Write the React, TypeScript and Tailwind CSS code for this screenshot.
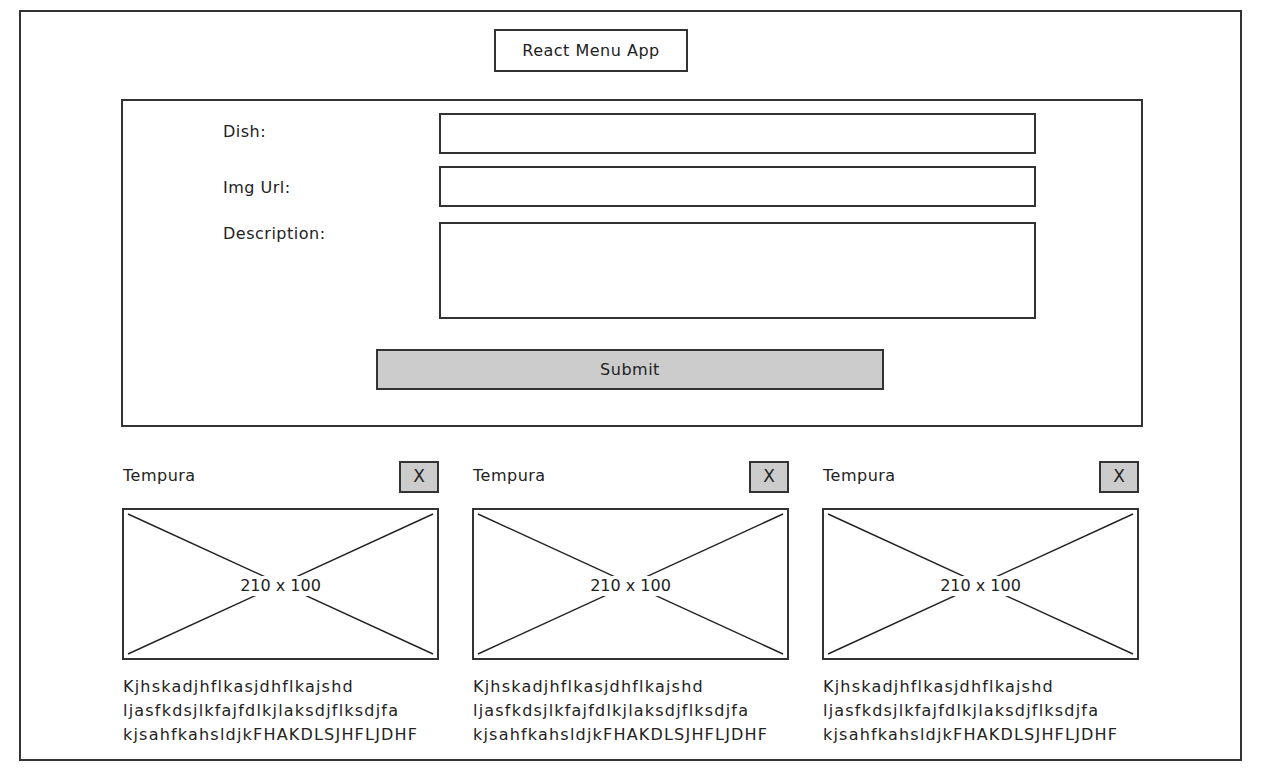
import React from 'react';

const font = { fontFamily: '"DejaVu Sans", "Liberation Sans", sans-serif' };

const dishes = [0, 1, 2].map((i) => ({
  id: i,
  name: 'Tempura',
  lines: [
    'Kjhskadjhflkasjdhflkajshd',
    'ljasfkdsjlkfajfdlkjlaksdjflksdjfa',
    'kjsahfkahsldjkFHAKDLSJHFLJDHF',
  ],
}));

// wireframe image placeholder with the cross
const Placeholder: React.FC = () => (
  <div className="relative h-[152px] w-full border-2 border-[#333] bg-white">
    <svg className="absolute inset-0 h-full w-full" preserveAspectRatio="none" viewBox="0 0 313 148">
      <line x1="4" y1="4" x2="309" y2="144" stroke="#222" strokeWidth="1.4" />
      <line x1="309" y1="4" x2="4" y2="144" stroke="#222" strokeWidth="1.4" />
    </svg>
    <div className="absolute inset-0 flex items-center justify-center pt-[3px]">
      <span className="bg-white px-[2px] text-[16px] leading-[20px] text-[#222]">210 x 100</span>
    </div>
  </div>
);

const Card: React.FC<{ name: string; lines: string[] }> = ({ name, lines }) => (
  <div className="flex w-[317px] flex-col">
    <div className="flex h-[32px] items-start justify-between">
      <span className="pl-[1px] pt-[5px] text-[16px] leading-[20px] tracking-[0.5px] text-[#222]">{name}</span>
      <button className="flex h-[32px] w-[40px] items-center justify-center border-2 border-[#333] bg-[#cccccc] text-[17px] text-[#222]">
        X
      </button>
    </div>
    <div className="mt-[15px]">
      <Placeholder />
    </div>
    <div className="mt-[15px] pl-[1px] text-[16px] leading-[24px] tracking-[1.2px] text-[#222]">
      {lines.map((l, i) => (
        <div key={i}>{l}</div>
      ))}
    </div>
  </div>
);

const App: React.FC = () => {
  return (
    <div className="h-[777px] w-[1274px] overflow-hidden bg-white" style={font}>
      <div className="ml-[19px] mt-[10px] h-[751px] w-[1223px] border-2 border-[#333]">
        {/* Title */}
        <div className="ml-[473px] mt-[17px] flex h-[43px] w-[194px] items-center justify-center border-2 border-[#333] text-[16px] tracking-[0.5px] text-[#222]">
          React Menu App
        </div>

        {/* Form */}
        <div className="ml-[100px] mt-[27px] h-[328px] w-[1022px] border-2 border-[#333] text-[16px] leading-[20px] tracking-[0.5px] text-[#222]">
          <div className="ml-[100px] mt-[12px] flex flex-col gap-[12px]">
            <div className="flex">
              <span className="w-[216px] pt-[9px]">Dish:</span>
              <div className="h-[41px] w-[597px] border-2 border-[#333]" />
            </div>
            <div className="flex">
              <span className="w-[216px] pt-[12px]">Img Url:</span>
              <div className="h-[41px] w-[597px] border-2 border-[#333]" />
            </div>
            <div className="mt-[3px] flex">
              <span className="w-[216px] pt-[2px]">Description:</span>
              <div className="h-[97px] w-[597px] border-2 border-[#333]" />
            </div>
          </div>
          <div className="ml-[253px] mt-[30px] flex h-[41px] w-[508px] items-center justify-center border-2 border-[#333] bg-[#cccccc]">
            Submit
          </div>
        </div>

        {/* Dish cards */}
        <div className="ml-[101px] mt-[34px] flex gap-[33px]">
          {dishes.map((d) => (
            <Card key={d.id} name={d.name} lines={d.lines} />
          ))}
        </div>
      </div>
    </div>
  );
};

export default App;
